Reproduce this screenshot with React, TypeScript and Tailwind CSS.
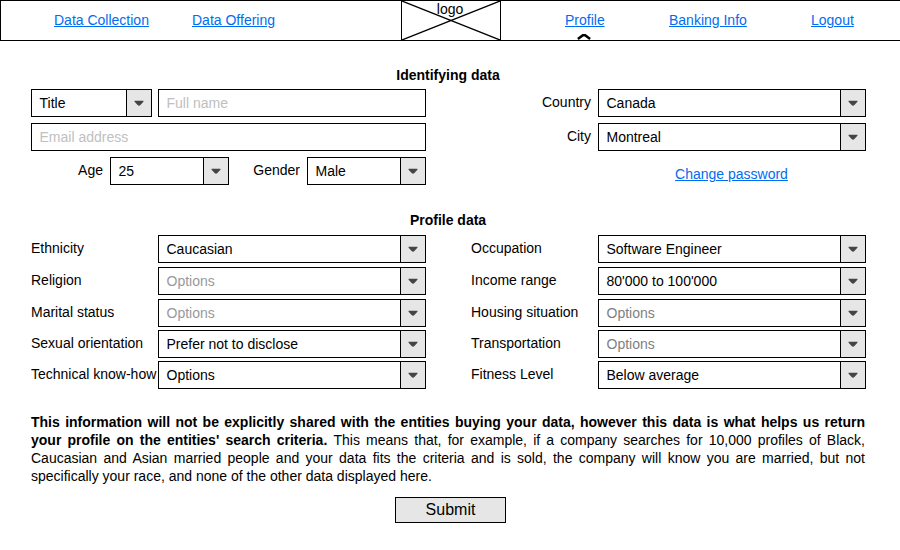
type FieldProps = { value: string; tone?: string; width?: string };

function Select({ value, tone = "text-black", width = "w-[268px]" }: FieldProps) {
  return (
    <div className={`flex h-7 shrink-0 border border-black bg-white ${width}`}>
      <span className={`flex-1 pl-[7.5px] leading-[26px] ${tone}`}>{value}</span>
      <span className="flex w-[25px] items-center justify-center border-l border-black bg-[#e6e6e6]">
        <svg width="10" height="6" viewBox="0 0 10 6" className="block">
          <path d="M0.6 0.8H9.4L9.4 1.8L6.4 5.1Q5 6.2 3.6 5.1L0.6 1.8Z" fill="#444" />
        </svg>
      </span>
    </div>
  );
}

function TextInput({ placeholder, width }: { placeholder: string; width: string }) {
  return (
    <div className={`h-7 border border-black bg-white pl-[7.5px] leading-[26px] text-[#c0c0c0] ${width}`}>
      {placeholder}
    </div>
  );
}

function Row({ label, value, tone }: { label: string; value: string; tone?: string }) {
  return (
    <div className="flex">
      <span className="w-[127px] shrink-0 whitespace-nowrap leading-[26px]">{label}</span>
      <Select value={value} tone={tone} />
    </div>
  );
}

function NavLink({ children, className }: { children: string; className: string }) {
  return (
    <a className={`whitespace-nowrap text-[#006df0] underline ${className}`} href="#">
      {children}
    </a>
  );
}

export default function App() {
  return (
    <div className="h-[550px] w-[900px] overflow-hidden bg-white font-['Liberation_Sans',Arial,sans-serif] text-[14px] text-black">
      <nav className="flex h-[41px] border-y border-l border-black leading-[38px]">
        <div className="flex w-[400px] pl-[53px]">
          <NavLink className="w-[138px]">Data Collection</NavLink>
          <NavLink className="">Data Offering</NavLink>
        </div>
        <div className="relative h-[39px] w-[100px] border-x border-black pr-[2px] text-center leading-[17px]">
          <svg className="absolute inset-0" width="98" height="39" viewBox="0 0 98 39">
            <path d="M0 0L98 39M98 0L0 39" stroke="#000" strokeWidth="1.3" />
          </svg>
          <span className="relative">logo</span>
        </div>
        <div className="flex pl-[64px]">
          <div className="relative w-[104px]">
            <NavLink className="">Profile</NavLink>
            <svg className="absolute left-[12px] top-[32px]" width="14" height="8" viewBox="0 0 14 8">
              <path d="M0.9 6L5.8 2.3H8.2L13.1 6" fill="none" stroke="#000" strokeWidth="2.5" />
            </svg>
          </div>
          <NavLink className="w-[142px]">Banking Info</NavLink>
          <NavLink className="">Logout</NavLink>
        </div>
      </nav>

      <main className="pl-[31px]">
        <h2 className="mt-[25px] w-[834px] text-center font-bold leading-[18px]">Identifying data</h2>
        <section className="mt-[5px] flex w-[835px] justify-between">
          <div className="flex w-[395px] flex-col gap-[6px]">
            <div className="flex gap-[6px]">
              <Select value="Title" width="w-[121px]" />
              <TextInput placeholder="Full name" width="w-[268px]" />
            </div>
            <TextInput placeholder="Email address" width="w-[395px]" />
            <div className="flex justify-end">
              <span className="pr-[7px] leading-[26px]">Age</span>
              <Select value="25" width="w-[119px]" />
              <span className="w-[78px] pr-[7px] text-right leading-[26px]">Gender</span>
              <Select value="Male" width="w-[119px]" />
            </div>
          </div>
          <div className="flex flex-col gap-[6px]">
            <div className="flex justify-end">
              <span className="pr-[7px] leading-[26px]">Country</span>
              <Select value="Canada" />
            </div>
            <div className="flex justify-end">
              <span className="pr-[7px] leading-[26px]">City</span>
              <Select value="Montreal" />
            </div>
            <div className="w-[268px] self-end pr-[1px] pt-[8px] text-center leading-[18px]">
              <NavLink className="">Change password</NavLink>
            </div>
          </div>
        </section>

        <h2 className="mt-[26px] w-[834px] text-center font-bold leading-[18px]">Profile data</h2>
        <section className="mt-[6px] flex gap-[45px]">
          <div className="grid grid-rows-[32px_32px_31px_31px_28px]">
            <Row label="Ethnicity" value="Caucasian" />
            <Row label="Religion" value="Options" tone="text-[#999]" />
            <Row label="Marital status" value="Options" tone="text-[#999]" />
            <Row label="Sexual orientation" value="Prefer not to disclose" />
            <Row label="Technical know-how" value="Options" />
          </div>
          <div className="grid grid-rows-[32px_32px_31px_31px_28px]">
            <Row label="Occupation" value="Software Engineer" />
            <Row label="Income range" value="80'000 to 100'000" />
            <Row label="Housing situation" value="Options" tone="text-[#808080]" />
            <Row label="Transportation" value="Options" tone="text-[#808080]" />
            <Row label="Fitness Level" value="Below average" />
          </div>
        </section>

        <p className="mt-[24px] w-[834px] text-justify leading-[18px]">
          <b>
            This information will not be explicitly shared with the entities buying your data, however this data is
            what helps us return your profile on the entities' search criteria.{" "}
          </b>
          This means that, for example, if a company searches for 10,000 profiles of Black, Caucasian and Asian married
          people and your data fits the criteria and is sold, the company will know you are married, but not
          specifically your race, and none of the other data displayed here.
        </p>
        <button className="ml-[364px] mt-[12px] block h-[26px] w-[111px] border border-black bg-[#e6e6e6] text-[16px] leading-[24px]">
          Submit
        </button>
      </main>
    </div>
  );
}
